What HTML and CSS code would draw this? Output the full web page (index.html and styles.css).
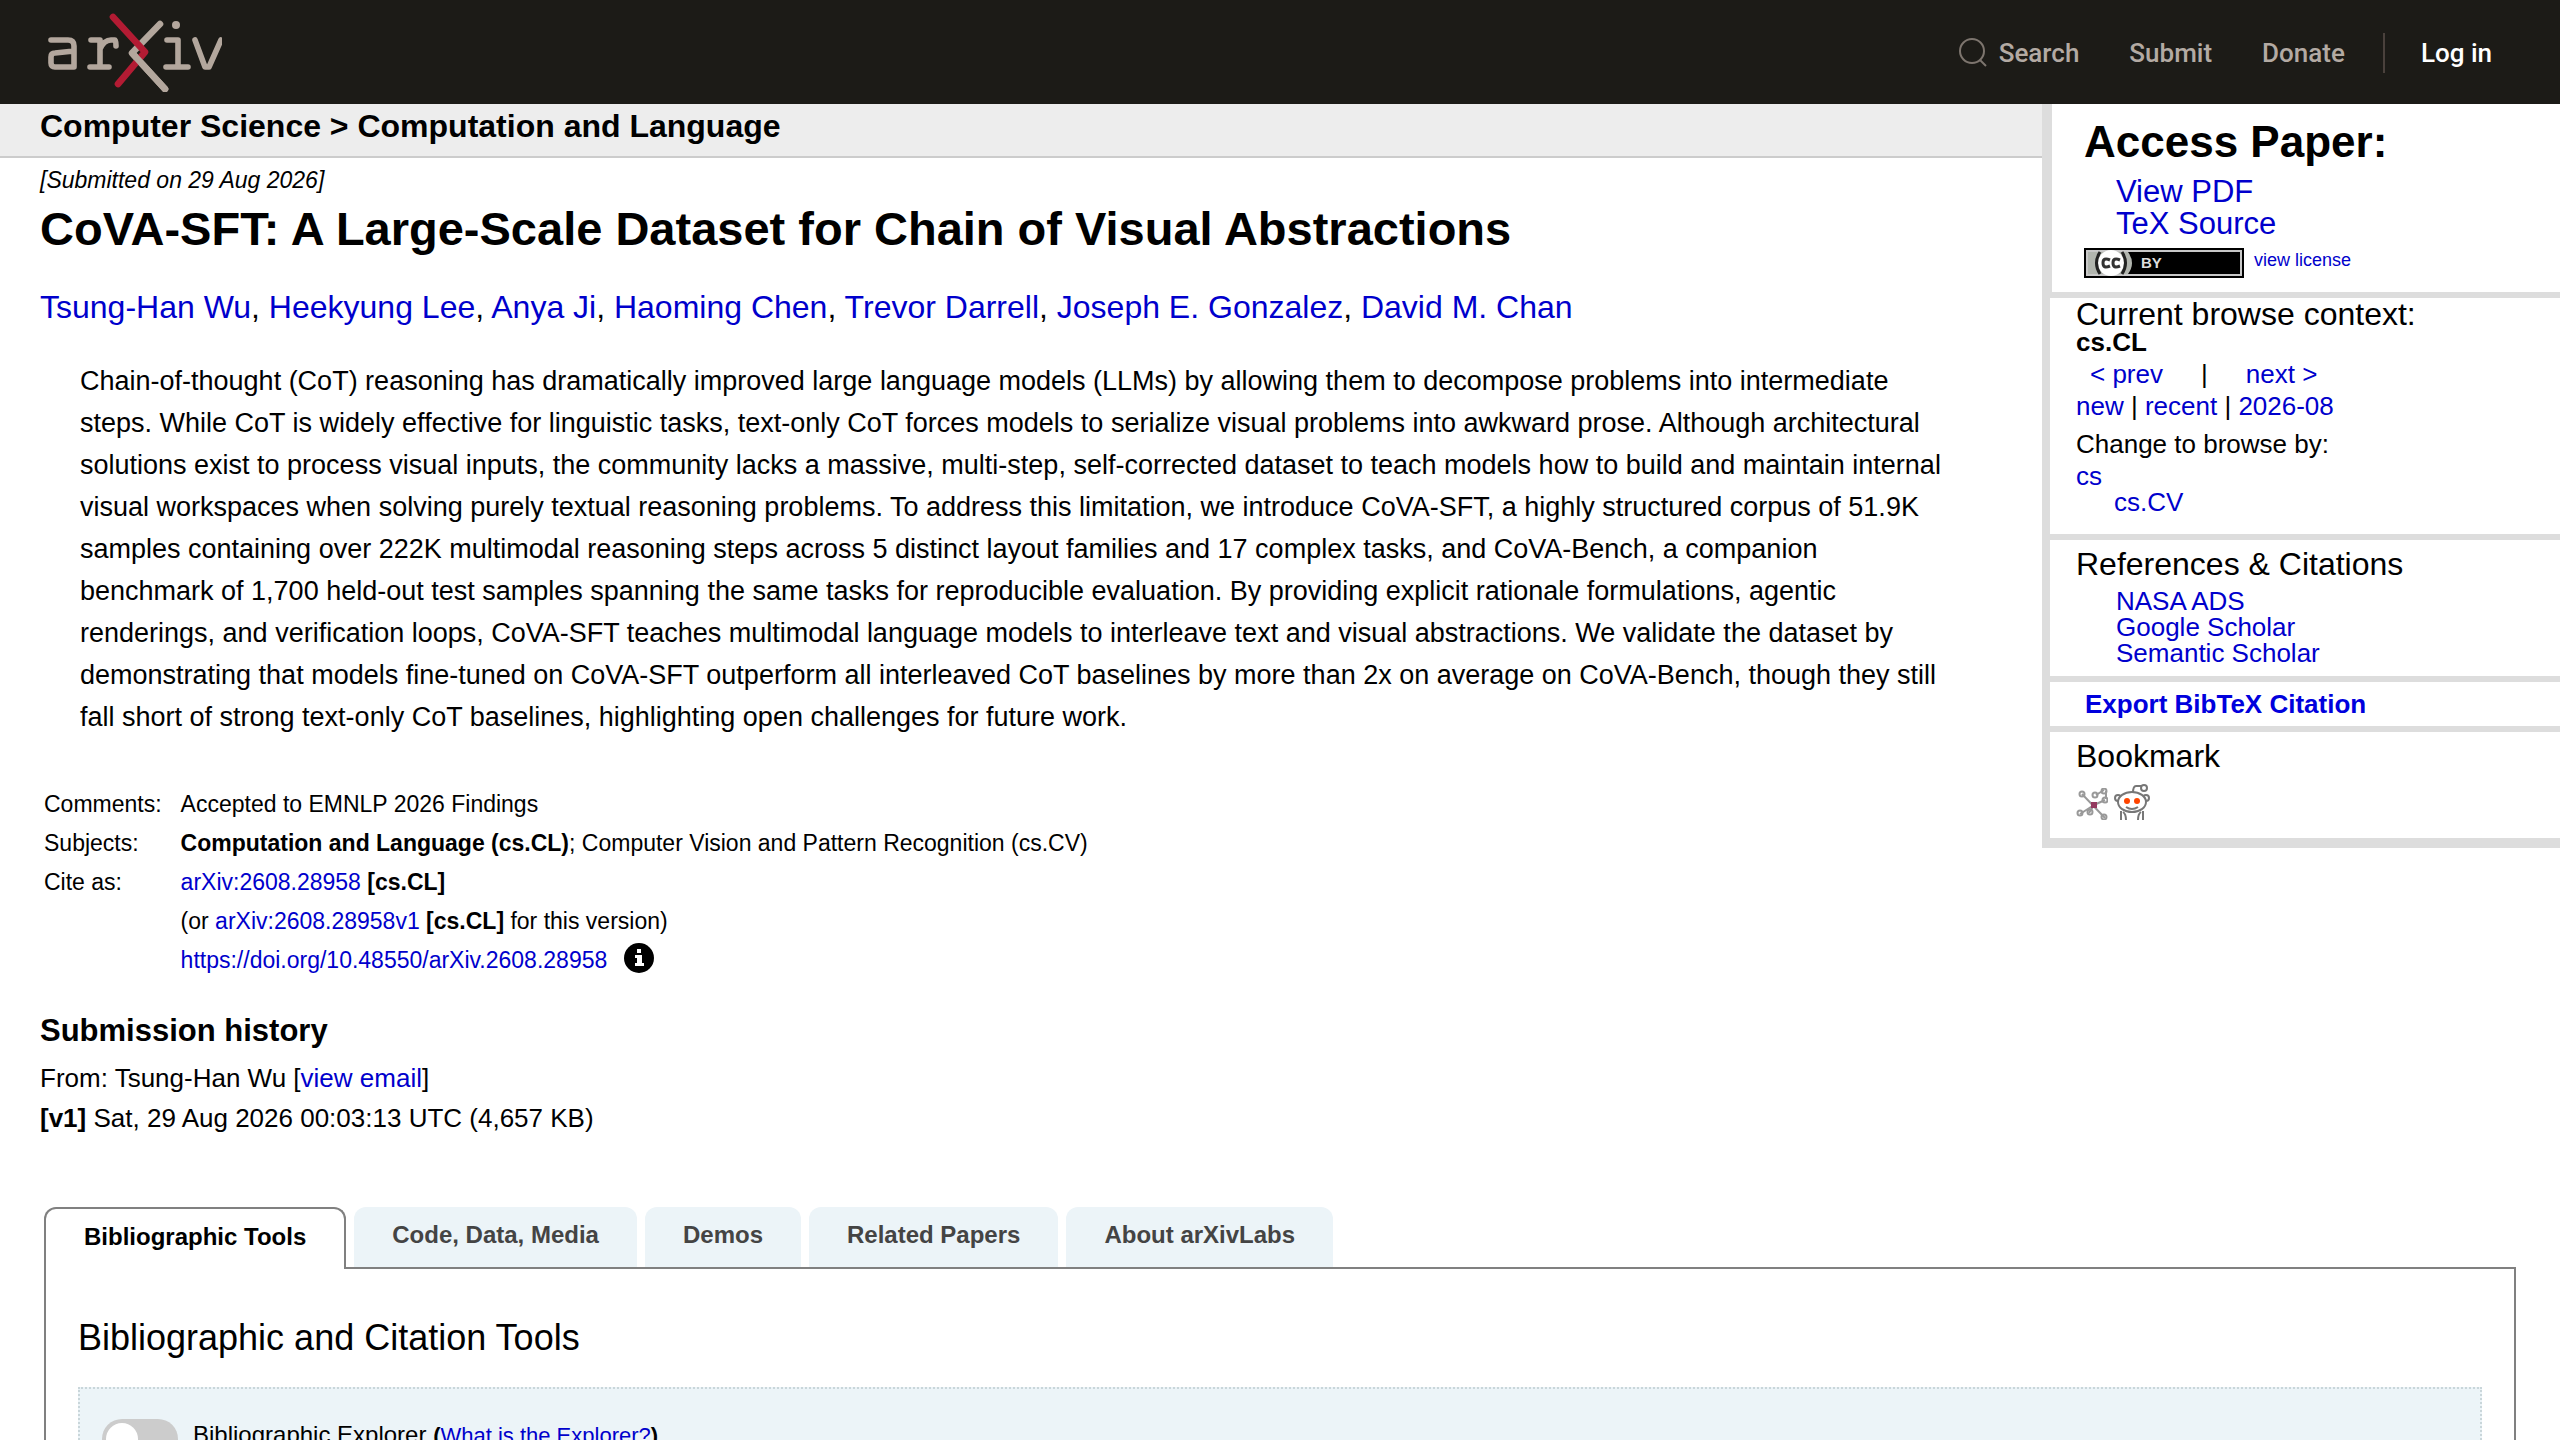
FILE: index.html
```html
<!DOCTYPE html>
<html lang="en">
<head>
  <meta charset="UTF-8" />
  <title>CoVA-SFT: A Large-Scale Dataset for Chain of Visual Abstractions</title>
  <link rel="stylesheet" href="styles.css">
</head>
<body>
  <header class="site-header">
    <a class="logo" href="#" aria-label="arXiv">
      <svg width="176" height="80" viewBox="0 0 176 80" fill="none" stroke="#b3a79d" stroke-width="5.6" stroke-linecap="round" stroke-linejoin="round">
        <path d="M5 28h17q6 0 6 6v21H9q-4 0-4-4v-6q0-4 4-4l19-2"/>
        <path d="M45 28h9v26M44 55h19M54 37q4-9 11-9h4q1 0 1 6"/>
        <path d="M114 12L86 41L119 77" stroke-width="6.6"/>
        <path d="M67 5L99 40L72 72" stroke="#b31b33" stroke-width="6.6"/>
        <path d="M87 42L119 77" stroke-width="6.6"/>
        <path d="M121 28h11v26M120 55h22M149 28l10 27h4l12-27"/>
        <circle cx="130" cy="13" r="4" fill="#b3a79d" stroke="none"/>
      </svg>
    </a>
    <nav class="site-nav">
      <a class="search" href="#">
        <svg width="28" height="30" viewBox="0 0 28 30" fill="none" stroke="#7d756e" stroke-width="2"><circle cx="13" cy="13" r="12"/><path d="M21 22l6 6"/></svg>
        Search
      </a>
      <a href="#">Submit</a>
      <a href="#">Donate</a>
      <a class="login" href="#">Log in</a>
    </nav>
  </header>

  <div class="columns">
    <main>
      <h1 class="subject">Computer Science &gt; Computation and Language</h1>
      <div class="paper">
        <div class="dateline">[Submitted on 29 Aug 2026]</div>
        <h2 class="title">CoVA-SFT: A Large-Scale Dataset for Chain of Visual Abstractions</h2>
        <div class="authors"><a href="#">Tsung-Han Wu</a>, <a href="#">Heekyung Lee</a>, <a href="#">Anya Ji</a>, <a href="#">Haoming Chen</a>, <a href="#">Trevor Darrell</a>, <a href="#">Joseph E. Gonzalez</a>, <a href="#">David M. Chan</a></div>
        <blockquote class="abstract">Chain-of-thought (CoT) reasoning has dramatically improved large language models (LLMs) by allowing them to decompose problems into intermediate steps. While CoT is widely effective for linguistic tasks, text-only CoT forces models to serialize visual problems into awkward prose. Although architectural solutions exist to process visual inputs, the community lacks a massive, multi-step, self-corrected dataset to teach models how to build and maintain internal visual workspaces when solving purely textual reasoning problems. To address this limitation, we introduce CoVA-SFT, a highly structured corpus of 51.9K samples containing over 222K multimodal reasoning steps across 5 distinct layout families and 17 complex tasks, and CoVA-Bench, a companion benchmark of 1,700 held-out test samples spanning the same tasks for reproducible evaluation. By providing explicit rationale formulations, agentic renderings, and verification loops, CoVA-SFT teaches multimodal language models to interleave text and visual abstractions. We validate the dataset by demonstrating that models fine-tuned on CoVA-SFT outperform all interleaved CoT baselines by more than 2x on average on CoVA-Bench, though they still fall short of strong text-only CoT baselines, highlighting open challenges for future work.</blockquote>
        <table class="meta">
          <tr><td>Comments:</td><td>Accepted to EMNLP 2026 Findings</td></tr>
          <tr><td>Subjects:</td><td><b>Computation and Language (cs.CL)</b>; Computer Vision and Pattern Recognition (cs.CV)</td></tr>
          <tr><td>Cite as:</td><td><a href="#">arXiv:2608.28958</a> <b>[cs.CL]</b></td></tr>
          <tr><td></td><td>(or <a href="#">arXiv:2608.28958v1</a> <b>[cs.CL]</b> for this version)</td></tr>
          <tr>
            <td></td>
            <td><a href="#">https://doi.org/10.48550/arXiv.2608.28958</a>
              <svg class="info" width="30" height="30" viewBox="0 0 30 30"><circle cx="15" cy="15" r="15"/><path fill="#fff" d="M13 6h4v4h-4zM11 12h7v8h2v3h-9v-3h2v-5h-2z"/></svg></td>
          </tr>
        </table>
        <section class="history">
          <h2>Submission history</h2>
          <div>From: Tsung-Han Wu [<a href="#">view email</a>]</div>
          <div><b>[v1]</b> Sat, 29 Aug 2026 00:03:13 UTC (4,657 KB)</div>
        </section>
      </div>
    </main>

    <aside>
      <section class="access">
        <h2>Access Paper:</h2>
        <ul>
          <li><a href="#">View PDF</a></li>
          <li><a href="#">TeX Source</a></li>
        </ul>
        <div class="license">
          <svg width="160" height="30" viewBox="0 0 160 30" role="img" aria-label="license icon">
            <path d="M0 0h160v30H0z"/>
            <path fill="#c8c8c8" d="M2 2h156v26H2z"/>
            <path d="M44 4h112v22H44z"/>
            <path fill="#b1b5ae" d="M4 4h40q8 11 0 22H4z"/>
            <circle cx="27" cy="15" r="13" fill="#fff"/>
            <path fill="none" stroke="#222" stroke-width="3" d="M16 4q-7 11 0 22M38 4q7 11 0 22"/>
            <path fill="none" stroke="#333" stroke-width="3" d="M26 12q-7-3-7 3t7 3M36 12q-7-3-7 3t7 3"/>
            <text x="57" y="20">BY</text>
          </svg>
          <a href="#">view license</a>
        </div>
      </section>
      <section class="browse">
        <h3>Current browse context:</h3>
        <b class="current">cs.CL</b>
        <div class="prevnext"><a href="#">&lt; prev</a><span>|</span><a href="#">next &gt;</a></div>
        <div class="list"><a href="#">new</a> | <a href="#">recent</a> | <a href="#">2026-08</a></div>
        <div class="switch">Change to browse by:</div>
        <a class="group" href="#">cs</a>
        <a class="group sub" href="#">cs.CV</a>
      </section>
      <section class="refs">
        <h3>References &amp; Citations</h3>
        <ul>
          <li><a href="#">NASA ADS</a></li>
          <li><a href="#">Google Scholar</a></li>
          <li><a href="#">Semantic Scholar</a></li>
        </ul>
      </section>
      <section class="export"><button type="button">Export BibTeX Citation</button></section>
      <section class="bookmark">
        <h3>Bookmark</h3>
        <div class="icons">
          <a href="#" aria-label="BibSonomy"><svg width="32" height="32" viewBox="0 0 32 32" fill="none" stroke="#999" stroke-width="2"><path d="M6 6l23 24M18 17L4 26M18 17l11-5M18 17l-5 8M20 7l8-5M30 3v8" /><circle cx="6" cy="6" r="2.5"/><circle cx="19" cy="7" r="2.5"/><circle cx="28" cy="3" r="2.5"/><circle cx="29" cy="12" r="2.5"/><circle cx="4" cy="25" r="2.5"/><circle cx="14" cy="24" r="2.5"/><circle cx="28" cy="29" r="2.5"/><path fill="#943a5f" stroke="none" d="M15 14h6v6h-6z"/></svg></a>
          <a href="#" aria-label="Reddit"><svg width="36" height="36" viewBox="0 0 36 36" fill="none" stroke="#777" stroke-width="2"><path d="M19 9q0-7 3-7h5M7 36v-9M12 36q0-6-3-8M29 36v-9M24 36q0-6 3-8"/><circle cx="30" cy="4" r="3"/><circle cx="4" cy="14" r="3"/><circle cx="32" cy="14" r="3"/><ellipse cx="18" cy="18" rx="14" ry="10" fill="#fff"/><path d="M12 23q6 4 12 0"/><g fill="#ff4500" stroke="none"><circle cx="13" cy="17" r="3"/><circle cx="23" cy="17" r="3"/></g></svg></a>
        </div>
      </section>
    </aside>
  </div>

  <section class="labs">
    <div class="tabs" role="tablist">
      <button type="button" class="active" role="tab">Bibliographic Tools</button>
      <button type="button" role="tab">Code, Data, Media</button>
      <button type="button" role="tab">Demos</button>
      <button type="button" role="tab">Related Papers</button>
      <button type="button" role="tab">About arXivLabs</button>
    </div>
    <div class="panel">
      <h2>Bibliographic and Citation Tools</h2>
      <div class="tool">
        <input type="checkbox" id="explorer">
        <div><label for="explorer">Bibliographic Explorer</label> <span class="what"><b>(</b><a href="#">What is the Explorer?</a><b>)</b></span></div>
      </div>
    </div>
  </section>
</body>
</html>
```
FILE: styles.css
```css
* {
  box-sizing: border-box;
}
body {
  margin: 0;
  height: 100vh;
  overflow: hidden;
  background: #fff;
  color: #000;
  font-family: "Liberation Sans", Arial, sans-serif;
  font-size: 26px;
  line-height: 32px;
}
h1, h2, h3, ul, blockquote {
  margin: 0;
  padding: 0;
}
ul {
  list-style: none;
}
a {
  color: #0000cc;
  text-decoration: none;
}
button {
  font: inherit;
  cursor: pointer;
}
svg {
  display: block;
}

.site-header {
  display: flex;
  justify-content: space-between;
  align-items: center;
  height: 104px;
  padding: 0 68px 0 46px;
  background: #1c1b17;
}
.site-nav {
  display: flex;
  align-items: center;
  gap: 50px;
  padding-top: 2px;
  font-family: Roboto, sans-serif;
  font-size: 26px;
  font-weight: 500;
}
.site-nav a {
  color: #b3aaa3;
}
.site-nav .search {
  display: flex;
  align-items: center;
  gap: 12px;
}
.site-nav .login {
  margin-left: -12px;
  padding-left: 36px;
  border-left: 2px solid #4a413c;
  color: #fff;
  line-height: 40px;
}

.columns {
  display: grid;
  grid-template-columns: 1fr 518px;
  align-items: start;
}
.subject {
  height: 54px;
  padding: 6px 40px 0;
  border-bottom: 2px solid #ccc;
  background: #ededed;
  font-size: 32px;
}
.paper {
  padding: 0 40px;
}
.dateline {
  padding-top: 6px;
  font-size: 23px;
  font-style: italic;
}
.title {
  padding-top: 3px;
  font-size: 47px;
  line-height: 60px;
}
.authors {
  padding-top: 28px;
  font-size: 32px;
  line-height: 40px;
}
.abstract {
  padding: 33px 58px 0 40px;
  font-size: 27px;
  line-height: 42px;
}
.meta {
  margin: 46px 0 0;
  border-collapse: collapse;
  font-size: 23px;
}
.meta td {
  height: 39px;
  padding: 0 15px 0 4px;
}
.info {
  display: inline-block;
  margin-left: 10px;
  vertical-align: -5px;
}
.history {
  padding-top: 32px;
  line-height: 40px;
}
.history h2 {
  padding-bottom: 7px;
  font-size: 31px;
}

aside {
  border-left: 8px solid #ddd;
  border-bottom: 10px solid #ddd;
}
aside section + section {
  border-top: 6px solid #ddd;
}
aside section {
  padding: 0 26px;
}
aside h3 {
  font-size: 32px;
  font-weight: 400;
}
aside .access {
  height: 188px;
  padding: 16px 32px 0;
  border-left: 2px solid #ddd;
}
.access h2 {
  font-size: 44px;
  line-height: 44px;
}
.access ul {
  padding: 12px 32px 8px;
  font-size: 31px;
}
.license {
  display: flex;
  gap: 10px;
}
.license a {
  font-size: 18px;
  line-height: 24px;
}
.license text {
  fill: #ddd;
  font-size: 15px;
  font-weight: 700;
}
.browse {
  height: 242px;
}
.browse .current {
  display: block;
  line-height: 24px;
}
.prevnext {
  display: flex;
  gap: 38px;
  padding: 4px 14px 0;
}
.switch {
  padding-top: 6px;
}
.browse .group {
  display: block;
}
.browse .sub {
  padding-left: 38px;
  line-height: 20px;
}
.refs {
  height: 142px;
}
.refs h3 {
  padding-top: 8px;
}
.refs ul {
  padding: 8px 40px;
  line-height: 26px;
}
.export button {
  height: 44px;
  padding: 0 9px;
  border: 0;
  background: none;
  color: #0000dd;
  font-weight: 700;
}
.bookmark h3 {
  padding-top: 8px;
}
.bookmark .icons {
  display: flex;
  align-items: end;
  gap: 6px;
  padding: 12px 0 18px;
}

.labs {
  margin: 69px 44px 0;
}
.tabs {
  display: flex;
  gap: 8px;
}
.tabs button {
  height: 60px;
  padding: 0 38px 4px;
  border: 0;
  border-radius: 12px 12px 0 0;
  background: #ecf4f8;
  color: #444;
  font-size: 24px;
  font-weight: 700;
}
.tabs .active {
  height: 62px;
  margin-bottom: -2px;
  border: 2px solid #808080;
  border-bottom: 0;
  background: #fff;
  color: #000;
  z-index: 1;
}
.panel {
  padding: 49px 32px;
  border: 2px solid #808080;
}
.panel h2 {
  padding-bottom: 29px;
  font-size: 36px;
  font-weight: 400;
  line-height: 40px;
}
.tool {
  display: flex;
  gap: 15px;
  padding: 30px 22px;
  border: 2px dotted #c9d6da;
  background: #ecf4f8;
  font-size: 24px;
}
.tool .what {
  font-size: 22px;
}
.tool input {
  appearance: none;
  width: 76px;
  height: 40px;
  margin: 0;
  padding: 4px;
  border-radius: 20px;
  background: #ccc;
}
.tool input::before {
  content: "";
  display: block;
  width: 32px;
  height: 32px;
  border-radius: 50%;
  background: #fff;
}
.tool input:checked::before {
  margin-left: auto;
}
```
